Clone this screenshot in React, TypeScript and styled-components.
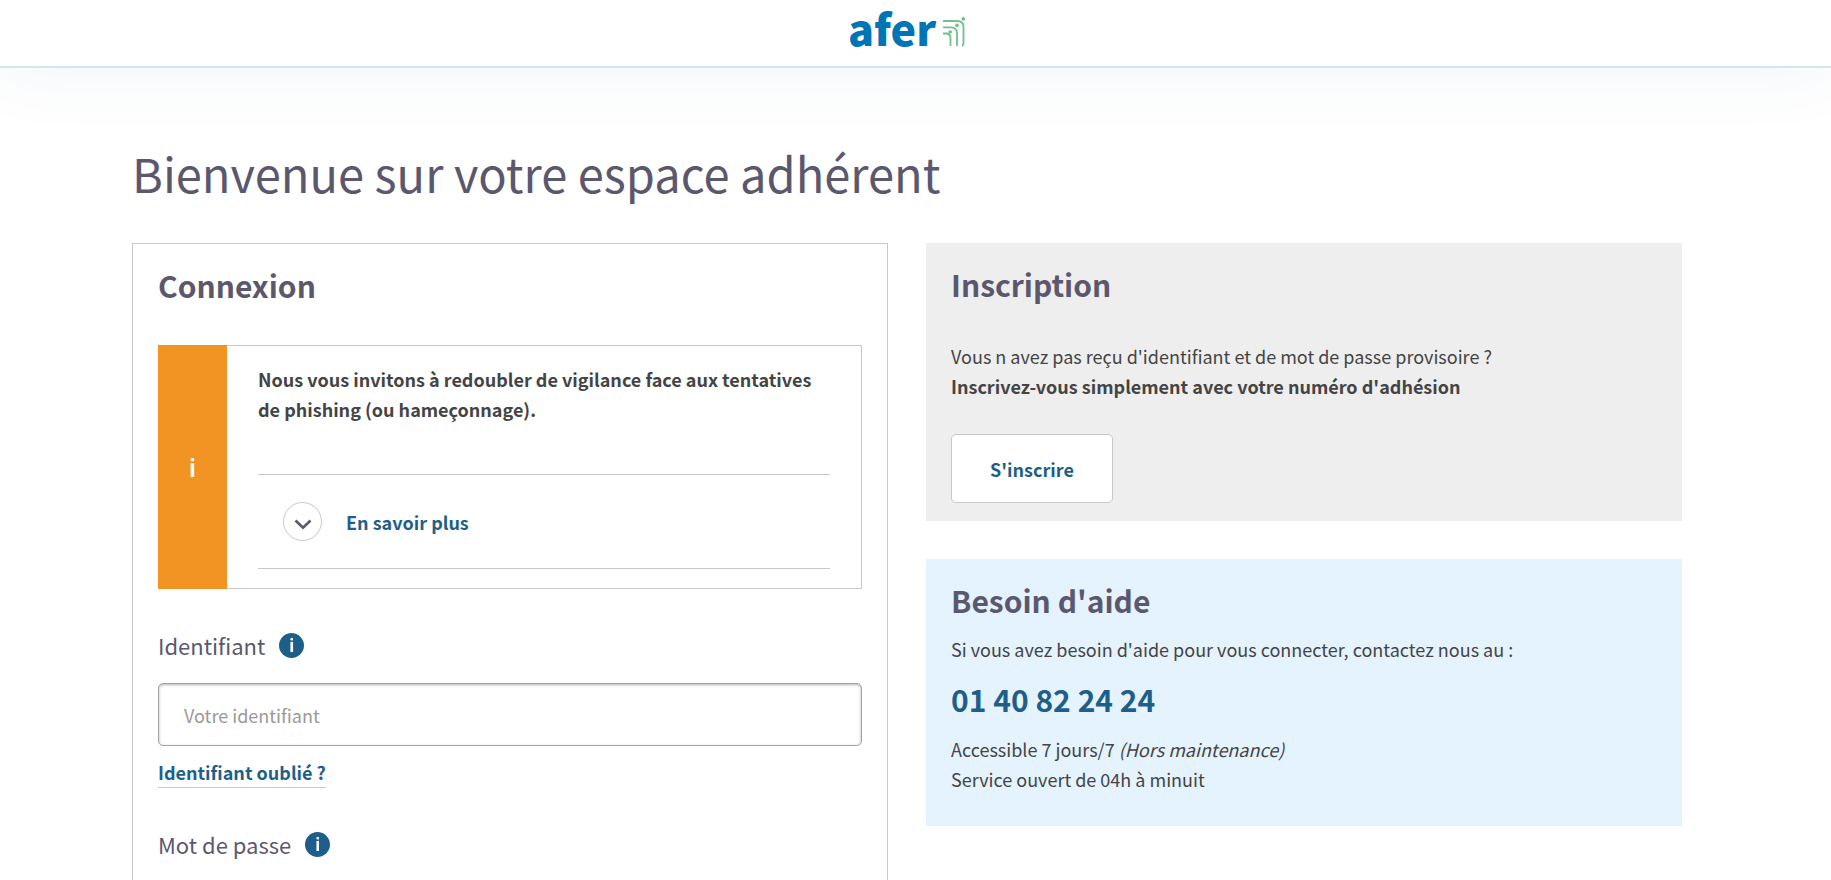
import React from 'react';
import styled, { createGlobalStyle } from 'styled-components';

const GlobalStyle = createGlobalStyle`
  *, *::before, *::after { box-sizing: border-box; }
  body {
    margin: 0;
    background: #fff;
    color: #444;
    font-family: "Noto Sans CJK SC", "Noto Sans", sans-serif;
    font-size: 18px;
    line-height: 30px;
  }
  h1, h2, p { margin: 0; }
  a, button, input { font: inherit; }
`;

const Page = styled.div`
  min-height: 100vh;
`;

const Header = styled.header`
  display: flex;
  align-items: flex-start;
  justify-content: center;
  height: 68px;
  padding-right: 17px;
  border-bottom: 2px solid #d6e4eb;
  box-shadow: 0 0 70px rgba(30, 94, 138, 0.08);
`;

const LogoLink = styled.a`
  display: flex;
  align-items: center;
  gap: 7px;
  color: #0075b6;
  font-size: 43px;
  font-weight: 900;
  line-height: 54px;
  text-decoration: none;

  svg { margin-top: 9px; }
`;

const Main = styled.main`
  display: flex;
  flex-direction: column;
  gap: 35px;
  max-width: 1567px;
  margin: 0 auto;
  padding: 70px 17px 64px 0;
`;

const Title = styled.h1`
  color: #5b586e;
  font-size: 47px;
  font-weight: 400;
  line-height: 70px;
`;

const Columns = styled.div`
  display: grid;
  grid-template-columns: 1fr 1fr;
  align-items: start;
  gap: 38px;
`;

const SideColumn = styled.div`
  display: flex;
  flex-direction: column;
  gap: 38px;
`;

const LoginCard = styled.section`
  padding: 22px 25px 48px;
  border: 1px solid #c8c8c8;
`;

const SidePanel = styled.section<{ $tone: string; $bottom: number }>`
  padding: 22px 25px ${(p) => p.$bottom}px;
  background: ${(p) => p.$tone};
`;

const Heading = styled.h2`
  color: #5b586e;
  font-size: 30px;
  font-weight: 700;
  line-height: 38px;
`;

const Notice = styled.div`
  display: flex;
  margin: 41px 0 40px;
  border: 1px solid #c8c8c8;
  border-left: 0;
`;

const NoticeMark = styled.div`
  display: flex;
  align-items: center;
  justify-content: center;
  width: 69px;
  margin: -1px 0;
  background: #f29423;
  color: #fff;
`;

const NoticeBody = styled.div`
  flex: 1;
  padding: 18px 31px 19px;
`;

const Strong = styled.p`
  font-weight: 700;
`;

const MoreButton = styled.button`
  display: flex;
  align-items: center;
  gap: 24px;
  width: 100%;
  height: 95px;
  margin-top: 50px;
  padding: 0 25px;
  border: solid #c8c8c8;
  border-width: 1px 0;
  background: none;
  color: #1e5e8a;
  font-weight: 700;
  cursor: pointer;
`;

const Circle = styled.span`
  display: flex;
  align-items: center;
  justify-content: center;
  width: 39px;
  height: 39px;
  border: 1px solid #c8c8c8;
  border-radius: 50%;
`;

const Field = styled.div`
  display: flex;
  flex-direction: column;
  align-items: flex-start;
  margin-bottom: 40px;
`;

const LabelRow = styled.div`
  display: flex;
  align-items: center;
  gap: 14px;
  height: 32px;
  margin-bottom: 22px;
`;

const Label = styled.label`
  color: #5b586e;
  font-size: 22px;
  line-height: 32px;
`;

const InfoButton = styled.button`
  display: flex;
  align-items: center;
  justify-content: center;
  width: 25px;
  height: 25px;
  padding: 0;
  border: 0;
  border-radius: 50%;
  background: #1e5e8a;
  color: #fff;
  cursor: pointer;
`;

const TextInput = styled.input`
  width: 100%;
  height: 63px;
  padding: 0 25px;
  border: 1px solid #a3a3a3;
  border-radius: 5px;
  background: #fff;
  box-shadow: inset 0 1px 3px rgba(0, 0, 0, 0.3);
  color: #444;
  &::placeholder { color: #999; opacity: 1; }
`;

const ForgotLink = styled.a`
  margin-top: 11px;
  border-bottom: 1px solid #c8c8c8;
  color: #1e5e8a;
  font-weight: 700;
  text-decoration: none;
`;

const SignUpText = styled.div`
  margin: 38px 0 33px;
`;

const SignUpButton = styled.button`
  display: block;
  height: 69px;
  padding: 0 38px;
  border: 1px solid #c8c8c8;
  border-radius: 5px;
  background: #fff;
  color: #1e5e8a;
  font-weight: 700;
  cursor: pointer;
`;

const HelpText = styled.div`
  display: flex;
  flex-direction: column;
  align-items: flex-start;
  gap: 12px;
  margin-top: 15px;
`;

const Phone = styled.a`
  color: #1e5e8a;
  font-size: 30px;
  font-weight: 700;
  line-height: 46px;
  text-decoration: none;
`;

const AferMark = () => (
  <svg width="23" height="30" viewBox="0 0 23 30" fill="none" stroke="#6fc08b" strokeWidth="1.8" aria-hidden="true">
    <path d="M0 4H14Q20.500 4 20.500 10V26Q20.500 28 19 29" />
    <path d="M0 10.300H8Q14 10.300 14 16V29" />
    <path d="M0 16.500H3Q7.500 16.500 7.500 21.500V29" />
    <g fill="#6fc08b" stroke="none">
      <circle cx="20.300" cy="1.900" r="1.800" />
      <circle cx="14" cy="8.400" r="1.800" />
      <circle cx="7.200" cy="15" r="1.800" />
    </g>
  </svg>
);

const InfoGlyph = ({ height }: { height: number }) => (
  <svg width={height / 4} height={height} viewBox="0 0 4 16" fill="currentColor" aria-hidden="true">
    <rect x="0.500" y="0" width="3" height="2.800" rx="1" />
    <rect x="0.500" y="4.500" width="3" height="11.500" />
  </svg>
);

const Chevron = () => (
  <svg width="18" height="16" viewBox="0 0 18 16" fill="none" stroke="#5b586e" strokeWidth="2.600" aria-hidden="true">
    <path d="M1.500 6.500 9 13.800 16.500 6.500" />
  </svg>
);

function InfoField(props: { id: string; label: string; type: string; placeholder: string; forgot: string }) {
  return (
    <Field>
      <LabelRow>
        <Label htmlFor={props.id}>{props.label}</Label>
        <InfoButton type="button" aria-label={`Aide : ${props.label}`}>
          <InfoGlyph height={14} />
        </InfoButton>
      </LabelRow>
      <TextInput id={props.id} type={props.type} placeholder={props.placeholder} />
      <ForgotLink href="#">{props.forgot}</ForgotLink>
    </Field>
  );
}

export default function App() {
  return (
    <Page>
      <GlobalStyle />
      <Header>
        <LogoLink href="#">
          afer
          <AferMark />
        </LogoLink>
      </Header>
      <Main>
        <Title>Bienvenue sur votre espace adhérent</Title>
        <Columns>
          <LoginCard>
            <Heading>Connexion</Heading>
            <Notice>
              <NoticeMark>
                <InfoGlyph height={19} />
              </NoticeMark>
              <NoticeBody>
                <Strong>
                  Nous vous invitons à redoubler de vigilance face aux tentatives de phishing (ou hameçonnage).
                </Strong>
                <MoreButton type="button">
                  <Circle>
                    <Chevron />
                  </Circle>
                  En savoir plus
                </MoreButton>
              </NoticeBody>
            </Notice>
            <InfoField
              id="identifiant"
              label="Identifiant"
              type="text"
              placeholder="Votre identifiant"
              forgot="Identifiant oublié ?"
            />
            <InfoField
              id="mot-de-passe"
              label="Mot de passe"
              type="password"
              placeholder="Votre mot de passe"
              forgot="Mot de passe oublié ?"
            />
          </LoginCard>
          <SideColumn>
            <SidePanel $tone="#eeeeee" $bottom={18}>
              <Heading>Inscription</Heading>
              <SignUpText>
                <p>Vous n avez pas reçu d'identifiant et de mot de passe provisoire ?</p>
                <Strong>Inscrivez-vous simplement avec votre numéro d'adhésion</Strong>
              </SignUpText>
              <SignUpButton type="button">S'inscrire</SignUpButton>
            </SidePanel>
            <SidePanel $tone="#e5f3ff" $bottom={32}>
              <Heading>Besoin d'aide</Heading>
              <HelpText>
                <p>Si vous avez besoin d'aide pour vous connecter, contactez nous au :</p>
                <Phone href="tel:0140822424">01 40 82 24 24</Phone>
                <p>
                  Accessible 7 jours/7 <em>(Hors maintenance)</em>
                  <br />
                  Service ouvert de 04h à minuit
                </p>
              </HelpText>
            </SidePanel>
          </SideColumn>
        </Columns>
      </Main>
    </Page>
  );
}
